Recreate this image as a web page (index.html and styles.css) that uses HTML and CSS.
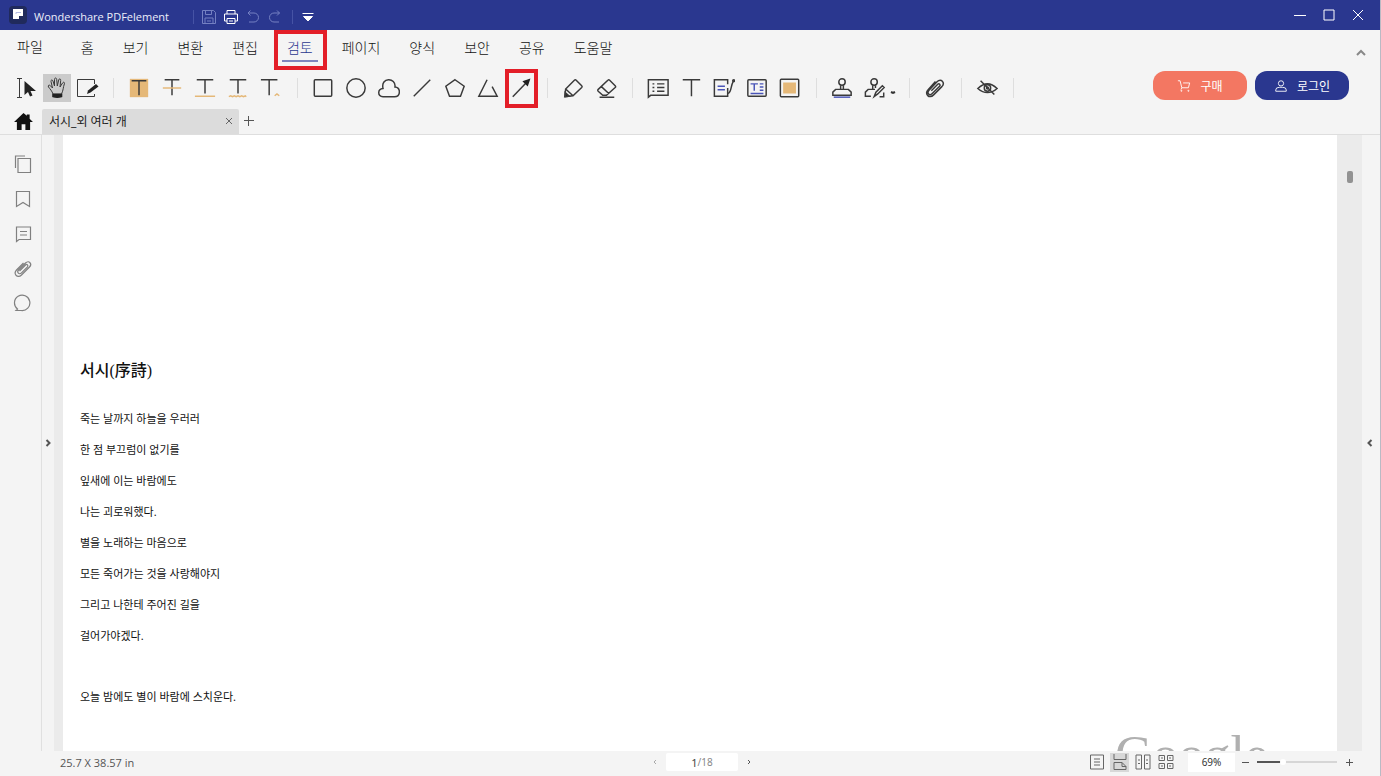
FILE: index.html
```html
<!DOCTYPE html>
<html lang="ko">
<head>
<meta charset="utf-8">
<title>Wondershare PDFelement</title>
<link rel="stylesheet" href="styles.css">
</head>
<body>
<div class="window">
  <header class="titlebar">
    <svg class="logo" viewBox="0 0 18 18"><rect width="18" height="18" rx="4" fill="#202a5c"/><path d="M4 3h10v7h-4v3H4z" fill="#fff"/><path d="M7 8V6.500h5" stroke="#b4bbe2" fill="none"/></svg>
    <h1 class="app-name">Wondershare PDFelement</h1>
    <div class="quick">
      <span class="quick-sep"></span>
      <button class="quick-btn dim" aria-label="저장"><svg viewBox="0 0 16 16"><path d="M1.500 1.500h11l2 2v11h-13zM4.500 1.500v4h6v-4M4 14.500V9h8v5.500M6 12h4"/></svg></button>
      <button class="quick-btn" aria-label="인쇄"><svg viewBox="0 0 16 16"><path d="M4 5V1.500h8V5M4 12H1.500V5h13v7H12M4 9.500h8v5H4zM6 12h4"/></svg></button>
      <button class="quick-btn dim" aria-label="실행 취소"><svg viewBox="0 0 16 16"><path d="M5.500 1.500 3 4l2.500 2.500M3 4h6a4.500 4.500 0 0 1 0 9H4"/></svg></button>
      <button class="quick-btn dim" aria-label="다시 실행"><svg viewBox="0 0 16 16"><path d="M10 1.500 12.500 4 10 6.500M12.500 4H7a4.500 4.500 0 0 0 0 9h5"/></svg></button>
      <span class="quick-sep late"></span>
      <button class="quick-btn" aria-label="사용자 지정"><svg viewBox="0 0 16 16"><path d="M2.500 4.500h11"/><path d="M3.500 7.500h9L8 12z" fill="#fff"/></svg></button>
    </div>
    <div class="controls">
      <button aria-label="최소화"><svg viewBox="0 0 14 14"><path d="M1 7.500h12"/></svg></button>
      <button aria-label="최대화"><svg viewBox="0 0 14 14"><path d="M2 2h10v10H2z"/></svg></button>
      <button aria-label="닫기"><svg viewBox="0 0 14 14"><path d="m2 2 10 10M12 2 2 12"/></svg></button>
    </div>
  </header>

  <nav class="menu">
    <button class="file">파일</button>
    <button>홈</button>
    <button>보기</button>
    <button>변환</button>
    <button>편집</button>
    <button class="active marked">검토</button>
    <button>페이지</button>
    <button>양식</button>
    <button>보안</button>
    <button>공유</button>
    <button>도움말</button>
    <button class="collapse" aria-label="리본 접기"><svg viewBox="0 0 12 8"><path d="M2 6 6 2l4 4"/></svg></button>
  </nav>

  <div class="toolbar">
    <div class="group tight">
      <button class="tool" aria-label="선택"><svg viewBox="0 0 24 24"><path class="thin" d="M2 2.500h5M4.500 2.500v19M2 21.500h5"/><path d="M9.500 5v14l3.500-3 2 4.500 2.500-1-2-4.500H21z" fill="#222" stroke="none"/></svg></button>
      <button class="tool pressed" aria-label="손 도구"><svg viewBox="0 0 24 24"><path class="thin" d="M8 18c-1-3-3-5-4.500-7-1-1.500.8-2.600 1.900-1.300L7.500 12 6 5.500C5.600 3.800 7.400 3.400 8 5l1.500 5V3.500c0-2 2-2 2.200 0L12.300 10l1.400-6c.4-1.800 2.300-1.300 2 .5L15 11l2.500-4c.9-1.500 2.500-.7 1.900.8C18 11.500 18.500 14 16.500 18z"/><path d="M8 18.500h8.500v2q-4.200 1.500-8.500 0z" fill="#222" stroke="#222"/></svg></button>
      <button class="tool" aria-label="편집"><svg viewBox="0 0 24 24"><path class="thin" d="M19.500 8V3.500h-17v17h17V18"/><path d="m12 18 1-3.500 8-6.500 2.500 2.500-8 6z" fill="#222" stroke="none"/></svg></button>
    </div>
    <span class="sep"></span>
    <div class="group">
      <button class="tool" aria-label="강조 표시"><svg viewBox="0 0 24 24"><path d="M2 2h20v20H2z" fill="#e5b878" stroke="none"/><path d="M4 4h16M12 4v16"/></svg></button>
      <button class="tool" aria-label="취소선"><svg viewBox="0 0 24 24"><path d="M4 3h16M12 3v17"/><path class="gold" d="M2 12h20"/></svg></button>
      <button class="tool" aria-label="밑줄"><svg viewBox="0 0 24 24"><path d="M3 3h18M12 3v15"/><path class="gold" d="M1 21h22"/></svg></button>
      <button class="tool" aria-label="물결선"><svg viewBox="0 0 24 24"><path d="M3 3h18M12 3v15"/><path class="gold" d="m2 21.500 2-1 2 1 2-1 2 1 2-1 2 1 2-1 2 1 2-1 1 1"/></svg></button>
      <button class="tool" aria-label="삽입"><svg viewBox="0 0 24 24"><path d="M1 3h18M10 3v17"/><path class="gold" d="m16 20.500 2.500-2 2.500 2"/></svg></button>
    </div>
    <span class="sep"></span>
    <div class="group">
      <button class="tool" aria-label="사각형"><svg viewBox="0 0 24 24"><rect x="2.500" y="3" width="19" height="18" rx="1"/></svg></button>
      <button class="tool" aria-label="타원"><svg viewBox="0 0 24 24"><circle cx="12" cy="12" r="10"/></svg></button>
      <button class="tool" aria-label="구름"><svg viewBox="0 0 24 24"><path d="M5.500 21.500C-1 21-.5 13 5.500 12.500 2.500 0 20 0 18.500 11c6.500.5 6.500 10.500-.5 10.500z"/></svg></button>
      <button class="tool" aria-label="선"><svg viewBox="0 0 24 24"><path d="M3 21 21 3"/></svg></button>
      <button class="tool" aria-label="다각형"><svg viewBox="0 0 24 24"><path d="m12 3 10 7-4 11H6L2 10z"/></svg></button>
      <button class="tool" aria-label="다각선"><svg viewBox="0 0 24 24"><path d="M11 3 2 21h20L16.500 10.500"/></svg></button>
      <button class="tool marked" aria-label="화살표"><svg viewBox="0 0 24 24"><path d="M3 21.500 18 6"/><path d="m21 3-2 6-4-4z" fill="#222" stroke="#222"/></svg></button>
    </div>
    <span class="sep"></span>
    <div class="group">
      <button class="tool" aria-label="연필"><svg viewBox="0 0 24 24"><path d="m4 13 9.500-9.500q1-1 2 0l6 6q1 1 0 2L12 20.500 3 21.500zM4 13l8 7.500"/><path d="m3.500 17 4.500 4-4.500.5z" fill="#222"/></svg></button>
      <button class="tool" aria-label="지우개"><svg viewBox="0 0 24 24"><path d="m3.500 13.500 10.500-10q1-1 2 0l6 6q1 1 0 2L12.500 20H8.500l-5-4.500q-1-1 0-2zM7 10.500l8 7.500M5 22h16"/></svg></button>
    </div>
    <span class="sep"></span>
    <div class="group">
      <button class="tool" aria-label="메모"><svg viewBox="0 0 24 24"><path d="M1.500 3h21.500v17H4l-2.500 2z"/><path d="M6 7.500h2m3 0h8M6 11.500h2m3 0h8M6 15.500h2m3 0h8"/></svg></button>
      <button class="tool" aria-label="타자기"><svg viewBox="0 0 24 24"><path d="M3 3h19M12.500 3v18"/></svg></button>
      <button class="tool" aria-label="콜아웃"><svg viewBox="0 0 24 24"><path d="M16 12v9H1.500V3H16v5"/><path d="M16.500 18c4-2 2.500-8 5.500-13"/><circle cx="22.500" cy="4" r="1"/><path class="blue" d="M5 10h8M5 14h8"/></svg></button>
      <button class="tool" aria-label="텍스트 상자"><svg viewBox="0 0 24 24"><rect x="2" y="3" width="20" height="18" rx="1"/><path class="blue" d="M5 7.500h8M9 7.500V15M15 7.500h4M15 11h4M15 14.500h4M5 18h14"/></svg></button>
      <button class="tool" aria-label="영역 강조"><svg viewBox="0 0 24 24"><rect x="1.500" y="2.500" width="20" height="19" rx="1"/><path d="M4.500 6h14v12h-14z" fill="#e5b878" stroke="none"/></svg></button>
    </div>
    <span class="sep"></span>
    <div class="group">
      <button class="tool" aria-label="스탬프"><svg viewBox="0 0 24 24"><circle cx="12" cy="5.500" r="3.500"/><path d="M10.500 9v4.500M13.500 9v4.500M5 13.500h14l3 3V20H2v-3.500z"/><path class="blue" d="M3 22h18"/></svg></button>
      <button class="tool" aria-label="서명"><svg viewBox="0 0 24 24"><circle cx="11" cy="5.500" r="3.500"/><path d="M9.500 9v4.500M12.500 9v3M12 13.500H4.500l-3 3V21h6M11 21.500l2-5 7-7 2 2-7 7zM17 21.500h4.500V17"/></svg></button>
      <span class="caret"><svg viewBox="0 0 8 8"><path d="m2 4 2 1 2-1"/></svg></span>
    </div>
    <span class="sep"></span>
    <div class="group">
      <button class="tool" aria-label="첨부"><svg viewBox="0 0 24 24"><path d="m8 15 7-7c1.500-1.500 3.500.5 2 2l-8 8c-3 3-6.500-.5-3.500-3.500l9-9.500c4-4 9 1 5 5.500l-9 9c-5 5-10-1-6-5.500l8-9"/></svg></button>
    </div>
    <span class="sep"></span>
    <div class="group">
      <button class="tool" aria-label="주석 숨기기"><svg viewBox="0 0 24 24"><path d="M2 12.500q10.500-10 21 0-10.500 9-21 0zM5 4l15 15"/><circle cx="12.500" cy="12" r="3.500"/><circle cx="12.500" cy="12" r="1"/></svg></button>
    </div>
    <span class="sep"></span>
    <div class="account">
      <button class="pill buy"><svg viewBox="0 0 16 16"><path d="M1 2h2.500l2 8H13l1.500-5.500H7M5.500 10 4.500 12"/><circle cx="5" cy="13.500" r=".6"/><circle cx="13" cy="13.500" r=".6"/></svg>구매</button>
      <button class="pill login"><svg viewBox="0 0 16 16"><circle cx="8" cy="5" r="3"/><path d="M2 14v-1.500q0-3 4-3h4q4 0 4 3V14z"/></svg>로그인</button>
    </div>
  </div>

  <div class="tabs">
    <button class="home" aria-label="홈 화면"><svg viewBox="0 0 20 18"><path d="M10 0 0 9.500h3V18h5v-6h4v6h5V9.500h3L16.500 6V1.500h-3V3z" fill="#111"/></svg></button>
    <div class="tab"><span>서시_외 여러 개</span><button class="tab-close" aria-label="탭 닫기"><svg viewBox="0 0 10 10"><path d="m2 2 6 6M8 2 2 8"/></svg></button></div>
    <button class="tab-add" aria-label="새 탭"><svg viewBox="0 0 12 12"><path d="M1 5.500h10M5.500 1v10"/></svg></button>
  </div>

  <main class="workspace">
    <aside class="rail">
      <button aria-label="축소판"><svg viewBox="0 0 20 20"><path d="M5 4.500h12.500v14H5zM2.500 14V2H12"/></svg></button>
      <button aria-label="책갈피"><svg viewBox="0 0 20 20"><path d="M3.500 2.500h13v15L10 13.500l-6.500 4z"/></svg></button>
      <button aria-label="주석"><svg viewBox="0 0 20 20"><path d="M3.500 3h14v12.500H6l-2.500 2zM7 7.500h7M7 11h7"/></svg></button>
      <button aria-label="첨부 파일"><svg viewBox="0 0 20 20"><path d="m6.500 12 6-6c1.500-1.500 3 .5 2 1.800l-6 6c-2.500 2.500-5-.5-3-2.800l7-7c3.500-3.500 7 1 4 4l-8 8c-4 4-8.500-1-5-5l7-7"/></svg></button>
      <button aria-label="검색"><svg viewBox="0 0 20 20"><path d="M4.500 15A7.700 7.700 0 1 1 8 16.500H3z"/></svg></button>
    </aside>
    <button class="expander left" aria-label="왼쪽 패널 열기"><svg viewBox="0 0 8 10"><path d="m2.500 2 3 3-3 3"/></svg></button>
    <section class="canvas">
      <article class="page">
        <h2>서시(序詩)</h2>
        <p>죽는 날까지 하늘을 우러러<br>한 점 부끄럼이 없기를<br>잎새에 이는 바람에도<br>나는 괴로워했다.<br>별을 노래하는 마음으로<br>모든 죽어가는 것을 사랑해야지<br>그리고 나한테 주어진 길을<br>걸어가야겠다.</p>
        <p>오늘 밤에도 별이 바람에 스치운다.</p>
        <span class="watermark">Google</span>
      </article>
      <div class="scroll"><span class="thumb"></span></div>
    </section>
    <button class="expander right" aria-label="오른쪽 패널 열기"><svg viewBox="0 0 8 10"><path d="m5.500 2-3 3 3 3"/></svg></button>
  </main>

  <footer class="status">
    <span class="size">25.7 X 38.57 in</span>
    <div class="pager">
      <button aria-label="이전 페이지"><svg class="faint" viewBox="0 0 8 10"><path d="M5 3 3 5l2 2"/></svg></button>
      <label class="page-box"><input type="text" value="1" aria-label="페이지 번호"><span>/18</span></label>
      <button aria-label="다음 페이지"><svg viewBox="0 0 8 10"><path d="m3 3 2 2-2 2"/></svg></button>
    </div>
    <div class="view">
      <button class="mode" aria-label="한 페이지"><svg viewBox="0 0 16 16"><path d="M1.500 1h13v14h-13zM5 5h6M5 8h6M5 11h6"/></svg></button>
      <button class="mode on" aria-label="연속 보기"><svg viewBox="0 0 16 16"><path d="M2 0v5.500h12V0M2 15.500V8.500h8l4 4v3zM10 8.500v4h4"/></svg></button>
      <button class="mode" aria-label="두 페이지"><svg viewBox="0 0 16 16"><path d="M1 1h5.500v14H1zM9.500 1H15v14H9.500zM3 6h2M3 9.500h2M11 6h2M11 9.500h2"/></svg></button>
      <button class="mode" aria-label="두 페이지 연속"><svg viewBox="0 0 16 16"><path d="M1 1.500h5.500v5H1zM9.500 1.500H15v5H9.500zM1 9.500h5.500v5H1zM9.500 9.500H15v5H9.500zM3 4h2M11 4h2M3 12h2M11 12h2"/></svg></button>
      <input class="zoom" type="text" value="69%" aria-label="확대 비율">
      <button class="step" aria-label="축소"><svg viewBox="0 0 8 8"><path d="M1 4.500h7"/></svg></button>
      <input class="slider" type="range" min="0" max="100" value="31" aria-label="확대/축소">
      <button class="step" aria-label="확대"><svg viewBox="0 0 8 8"><path d="M1 4.500h7M4.500 1v7"/></svg></button>
    </div>
  </footer>
</div>
</body>
</html>
```

FILE: styles.css
```css
* { box-sizing: border-box; }

body {
  margin: 0;
  background: #b9bac4;
  color: #333;
  font: 12px "Noto Sans", "Noto Sans CJK KR", sans-serif;
}

button {
  display: flex;
  align-items: center;
  justify-content: center;
  margin: 0;
  padding: 0;
  border: 0;
  background: none;
  color: inherit;
  font: inherit;
}

svg {
  display: block;
  flex: none;
  fill: none;
  stroke: currentColor;
}

.window {
  display: flex;
  flex-direction: column;
  height: 100vh;
  margin-right: 1px;
  background: #f4f4f4;
}

/* Title bar */
.titlebar {
  display: flex;
  flex: none;
  align-items: center;
  height: 30px;
  padding: 0 8px 0 9px;
  background: #2a378f;
  color: #fff;
}
.logo { width: 18px; height: 18px; stroke: none; }
.app-name {
  width: 159px;
  margin: 3px 0 0 7px;
  color: #eceefa;
  font-weight: 400;
  font-size: 11px;
  font-family: "Open Sans", sans-serif;
}
.quick { display: flex; align-items: center; padding-top: 4px; }
.quick-btn { width: 22px; }
.quick-btn svg { width: 16px; height: 16px; }
.dim { color: #7480c2; }
.quick-sep { width: 1px; height: 14px; margin: 0 4px 0 0; background: #4653a5; }
.quick-sep.late { margin: 0 4px 0 6px; }
.controls { display: flex; margin-left: auto; }
.controls button { width: 29px; height: 30px; }
.controls svg { width: 14px; height: 14px; }

/* Menu */
.menu {
  display: flex;
  flex: none;
  height: 38px;
  padding: 0 13px 0 3px;
  color: #111;
  font-weight: 300;
  font-size: 14px;
}
.menu button { position: relative; padding: 0 14px 4px; margin-right: 1px; }
.menu .file { padding-bottom: 6px; margin-right: 10px; }
.menu .active { color: #2a378f; }
.menu .active::before {
  content: "";
  position: absolute;
  right: 9px;
  bottom: 6px;
  left: 9px;
  height: 2px;
  background: #7e86bd;
}
.marked { position: relative; }
.marked::after {
  content: "";
  position: absolute;
  z-index: 1;
  border: 4px solid #e31e28;
}
.menu .marked::after { inset: 0 0 -2px 1px; }
.tool.marked::after { inset: -5px -3px -6px -2px; }
.menu .collapse { align-self: flex-end; margin: 0 0 11px auto; padding: 0; color: #888; }
.collapse svg { width: 12px; height: 8px; stroke-width: 2; }

/* Toolbar */
.toolbar {
  display: flex;
  flex: none;
  align-items: center;
  height: 39px;
  padding: 0 31px 0 13px;
}
.group { display: flex; gap: 5px; }
.group.tight { gap: 2px; }
.tool { width: 28px; height: 28px; }
.tool.pressed { background: #cbcbcb; }
.tool svg { width: 22px; height: 22px; stroke: #3a3a3a; stroke-width: 1.6; }
.tight .tool svg { width: 24px; height: 24px; }
.tool .thin { stroke-width: 1; }
.tool .gold { stroke: #e5b878; }
.tool .blue { stroke: #4a55b8; }
.sep { width: 1px; height: 20px; margin: 0 11px 0 12px; background: #dedede; }
.caret { display: flex; align-items: center; width: 8px; margin: 8px 0 0 -5px; }
.caret svg { width: 8px; height: 8px; stroke-width: 2; }
.account { display: flex; gap: 8px; margin-left: auto; }
.pill {
  gap: 9px;
  width: 94px;
  height: 29px;
  margin-bottom: 4px;
  border-radius: 12px;
  color: #fff;
}
.pill svg { width: 14px; height: 14px; }
.buy { background: #f37762; }
.login { background: #2a378f; }

/* Document tabs */
.tabs {
  display: flex;
  flex: none;
  height: 28px;
  padding: 2px 0 0 5px;
  border-bottom: 1px solid #dedede;
}
.home { width: 37px; }
.home svg { width: 19px; height: 17px; stroke: none; }
.tab {
  display: flex;
  align-items: center;
  justify-content: space-between;
  width: 197px;
  padding: 0 5px 1px 7px;
  border-radius: 2px 2px 0 0;
  background: #dcdcdc;
  color: #222;
}
.tab-close { color: #666; }
.tab-close svg { width: 10px; height: 10px; }
.tab-add { width: 20px; padding-bottom: 1px; color: #555; }
.tab-add svg { width: 12px; height: 12px; }

/* Workspace */
.workspace { display: flex; flex: 1; min-height: 0; }
.rail {
  display: flex;
  flex: none;
  flex-direction: column;
  gap: 15px;
  width: 42px;
  padding: 19px 0 0 13px;
  border-right: 1px solid #e0e0e0;
  color: #808080;
}
.rail button { width: 20px; height: 20px; }
.rail svg { width: 20px; height: 20px; stroke-width: 1.2; }
.expander { flex: none; width: 12px; color: #555; }
.expander svg { width: 8px; height: 10px; stroke-width: 2; }
.expander.right { width: 18px; padding-right: 3px; }
.canvas {
  display: flex;
  flex: 1;
  min-width: 0;
  padding-left: 9px;
  background: #ebebeb;
}
.page {
  position: relative;
  flex: 1;
  overflow: hidden;
  padding: 220px 17px 0;
  background: #fff;
  color: #111;
}
.page h2 {
  margin: 0 0 16px;
  font: 500 16px/32px "Liberation Serif", "Noto Sans CJK KR", serif;
}
.page p {
  margin: 0 0 30px;
  font-size: 11px;
  line-height: 31px;
}
.watermark {
  position: absolute;
  right: 69px;
  bottom: -34px;
  color: #b0b0b0;
  font: 52px/60px "Liberation Serif", serif;
}
.scroll { display: flex; flex: none; justify-content: center; width: 25px; padding-top: 36px; }
.thumb { width: 6px; height: 12px; border-radius: 2px; background: #929292; }

/* Status bar */
.status {
  display: grid;
  flex: none;
  grid-template-columns: 1fr auto 1fr;
  align-items: center;
  height: 25px;
  padding: 0 27px 3px 50px;
  color: #555;
}
.status input { border: 0; font: inherit; color: inherit; }
.size { padding-left: 10px; font-size: 11px; font-family: "Open Sans", sans-serif; }
.pager { display: flex; align-items: center; gap: 7px; }
.pager svg { width: 8px; height: 10px; }
.faint { color: #aaa; }
.page-box {
  display: flex;
  align-items: center;
  width: 72px;
  height: 18px;
  padding-left: 22px;
  border-radius: 2px;
  background: #fff;
  color: #888;
  font-size: 10px;
}
.page-box input { width: 10px; padding: 0; background: none; color: #444; font-size: 11px; text-align: right; }
.view { display: flex; align-items: center; justify-self: end; }
.mode { width: 23px; height: 19px; padding-bottom: 1px; }
.mode svg { width: 16px; height: 16px; color: #666; }
.mode.on { background: linear-gradient(#d8d8d8, #d8d8d8) center / 19px 100% no-repeat; }
.status .zoom {
  width: 47px;
  height: 19px;
  margin-left: 11px;
  padding: 0;
  background: #fff;
  color: #333;
  font-size: 10px;
  text-align: center;
}
.step { width: 8px; margin: 0 8px 0 6px; }
.step:last-child { margin: 0 0 0 8px; }
.step svg { width: 8px; height: 8px; }
.slider {
  width: 80px;
  height: 8px;
  margin: 0;
  appearance: none;
  background: linear-gradient(90deg, #555 30%, #d6d6d6 30%) center / 100% 2px no-repeat;
}
.slider::-webkit-slider-thumb { width: 6px; height: 6px; appearance: none; border-radius: 50%; background: #fff; }
```
